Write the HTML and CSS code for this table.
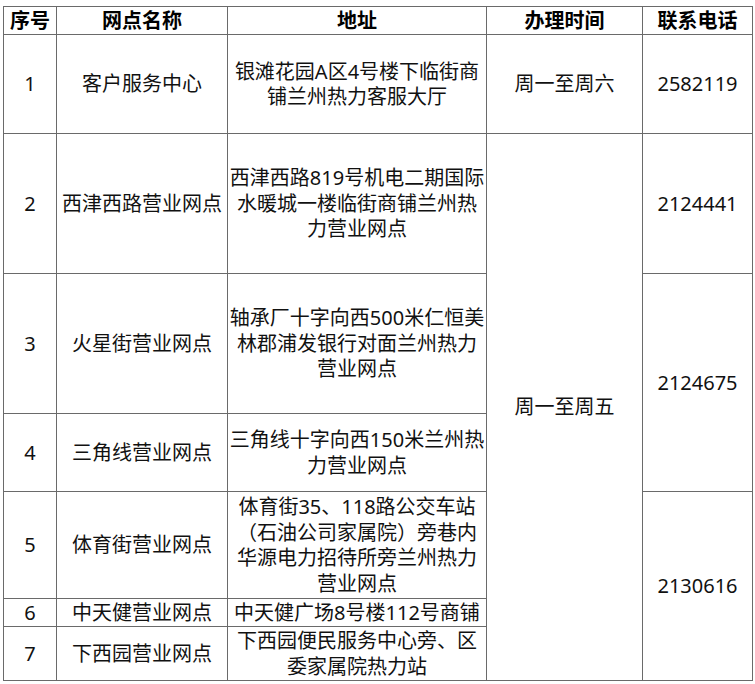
FILE: index.html
```html
<!DOCTYPE html>
<html lang="zh-CN">
<head>
<meta charset="utf-8">
<title>营业网点</title>
<link rel="stylesheet" href="styles.css">
</head>
<body>
<table class="grid">
  <colgroup>
    <col class="c-no">
    <col class="c-name">
    <col class="c-addr">
    <col class="c-time">
    <col class="c-tel">
  </colgroup>
  <thead>
    <tr class="r-head">
      <th>序号</th>
      <th>网点名称</th>
      <th>地址</th>
      <th>办理时间</th>
      <th>联系电话</th>
    </tr>
  </thead>
  <tbody>
    <tr class="r1">
      <td>1</td>
      <td>客户服务中心</td>
      <td>银滩花园A区4号楼下临街商<br>铺兰州热力客服大厅</td>
      <td>周一至周六</td>
      <td>2582119</td>
    </tr>
    <tr class="r2">
      <td>2</td>
      <td>西津西路营业网点</td>
      <td>西津西路819号机电二期国际<br>水暖城一楼临街商铺兰州热<br>力营业网点</td>
      <td rowspan="6">周一至周五</td>
      <td>2124441</td>
    </tr>
    <tr class="r3">
      <td>3</td>
      <td>火星街营业网点</td>
      <td>轴承厂十字向西500米仁恒美<br>林郡浦发银行对面兰州热力<br>营业网点</td>
      <td rowspan="2">2124675</td>
    </tr>
    <tr class="r4">
      <td>4</td>
      <td>三角线营业网点</td>
      <td>三角线十字向西150米兰州热<br>力营业网点</td>
    </tr>
    <tr class="r5">
      <td>5</td>
      <td>体育街营业网点</td>
      <td>体育街35、118路公交车站<br>（石油公司家属院）旁巷内<br>华源电力招待所旁兰州热力<br>营业网点</td>
      <td rowspan="3">2130616</td>
    </tr>
    <tr class="r6">
      <td>6</td>
      <td>中天健营业网点</td>
      <td>中天健广场8号楼112号商铺</td>
    </tr>
    <tr class="r7">
      <td>7</td>
      <td>下西园营业网点</td>
      <td>下西园便民服务中心旁、区<br>委家属院热力站</td>
    </tr>
  </tbody>
</table>
</body>
</html>
```

FILE: styles.css
```css
html, body {
  margin: 0;
  padding: 0;
  background: #ffffff;
}

body {
  padding: 6px 0 0 3px;
  font-family: "Noto Sans", "Noto Sans CJK SC", sans-serif;
  color: #111111;
}

.grid {
  border-collapse: collapse;
  table-layout: fixed;
  width: 749px;
  font-size: 20px;
  line-height: 25.5px;
}

.c-no { width: 53px; }
.c-name { width: 171px; }
.c-addr { width: 259px; }
.c-time { width: 156px; }
.c-tel { width: 110px; }

.grid th,
.grid td {
  border: 1px solid #6a6a6a;
  padding: 0;
  text-align: center;
  vertical-align: middle;
  white-space: nowrap;
  overflow: hidden;
}

.grid th {
  font-weight: 700;
  color: #000000;
}

.r-head { height: 28px; }
.r1 { height: 99px; }
.r2 { height: 140px; }
.r3 { height: 140px; }
.r4 { height: 78px; }
.r5 { height: 107px; }
.r6 { height: 28px; }
.r7 { height: 54px; }
```
